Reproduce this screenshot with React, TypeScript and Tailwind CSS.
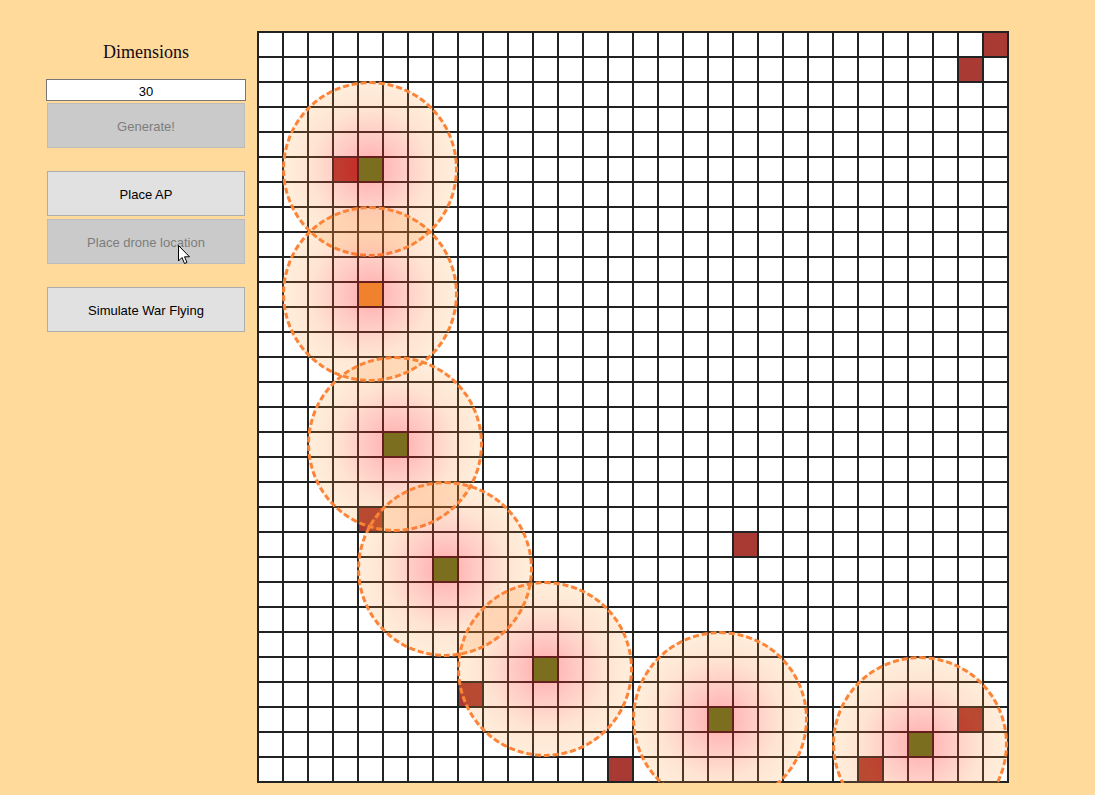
import React from "react";

const N = 30;
const reds: [number, number][] = [
  [29, 0], [28, 1], [3, 5], [4, 19], [19, 20], [8, 26], [14, 29], [28, 27], [24, 29],
];
const greens: [number, number][] = [
  [4, 5], [5, 16], [7, 21], [11, 25], [18, 27], [26, 28],
];
const oranges: [number, number][] = [[4, 10]];
const circles: [number, number][] = [
  [4, 5], [4, 10], [5, 16], [7, 21], [11, 25], [18, 27], [26, 28],
];

const key = (c: number, r: number) => `${c},${r}`;
const redSet = new Set(reds.map(([c, r]) => key(c, r)));
const greenSet = new Set(greens.map(([c, r]) => key(c, r)));
const orangeSet = new Set(oranges.map(([c, r]) => key(c, r)));

function Cell({ c, r }: { c: number; r: number }) {
  const k = key(c, r);
  if (greenSet.has(k)) return <div className="relative z-10 w-[23px] h-[23px] bg-[#7b6e1e]" />;
  if (orangeSet.has(k)) return <div className="relative z-10 w-[23px] h-[23px] bg-[#f0822e]" />;
  if (redSet.has(k)) return <div className="w-[23px] h-[23px] bg-[#a83a33]" />;
  return <div className="w-[23px] h-[23px] bg-white" />;
}

function Grid() {
  const cells = [];
  for (let r = 0; r < N; r++) {
    for (let c = 0; c < N; c++) {
      cells.push(<Cell key={key(c, r)} c={c} r={r} />);
    }
  }
  return (
    <div className="relative overflow-hidden bg-[#222222] p-[2px] grid grid-cols-[repeat(30,23px)] gap-[2px] w-[752px] h-[752px]">
      {cells}
      {circles.map(([c, r]) => (
        <div
          key={"circle" + key(c, r)}
          className="absolute w-[176px] h-[176px] rounded-full border-[3px] border-dashed border-[#fb8439] bg-[radial-gradient(circle_closest-side,rgba(255,0,0,0.33)_0%,rgba(255,60,40,0.28)_35%,rgba(255,130,50,0.22)_70%,rgba(255,150,40,0.17)_100%)]"
          style={{ left: 25 * c - 75, top: 25 * r - 75 }}
        />
      ))}
    </div>
  );
}

function Btn({ children, disabled, className = "" }: { children: React.ReactNode; disabled?: boolean; className?: string }) {
  return (
    <button
      className={
        "w-[198px] h-[45px] ml-[1px] pt-[3px] flex items-center justify-center border text-[13px] " +
        (disabled
          ? "bg-[#cacaca] border-[#bcbcbc] text-[#7d7d7d] "
          : "bg-[#e1e1e1] border-[#adadad] text-black ") +
        className
      }
    >
      {children}
    </button>
  );
}

export default function App() {
  return (
    <div
      className="relative min-h-screen w-full bg-[#ffda9b] flex items-start pl-[46px] pt-[31px]"
      style={{ fontFamily: '"Liberation Sans", Arial, sans-serif' }}
    >
      <div className="w-[200px] flex flex-col pt-[11px]">
        <div
          className="text-[18px] leading-[21px] text-center text-[#140a18]"
          style={{ fontFamily: '"Liberation Serif", "Times New Roman", serif' }}
        >
          Dimensions
        </div>
        <input
          readOnly
          value="30"
          className="mt-[16px] w-[200px] h-[22px] pt-[2px] bg-white border border-[#767676] text-center text-[13px] text-black outline-none"
        />
        <Btn disabled className="mt-[2px]">Generate!</Btn>
        <Btn className="mt-[23px]">Place AP</Btn>
        <Btn disabled className="mt-[3px]">Place drone location</Btn>
        <Btn className="mt-[23px]">Simulate War Flying</Btn>
      </div>
      <div className="ml-[11px]">
        <Grid />
      </div>
      <svg className="absolute left-[178px] top-[245px]" width="13" height="20" viewBox="0 0 13 20">
        <path d="M0.5 0.5 L0.5 16 L4 12.5 L6.5 18.5 L9 17.5 L6.5 11.8 L11.5 11.8 Z" fill="white" stroke="black" strokeWidth="1" strokeLinejoin="miter" />
      </svg>
    </div>
  );
}
